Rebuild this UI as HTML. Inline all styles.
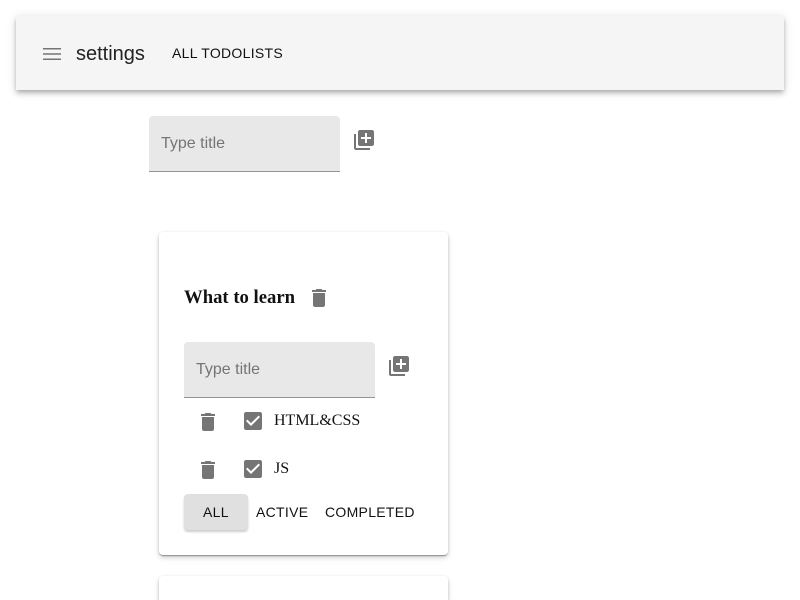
<!DOCTYPE html>
<html style="height:600px;overflow:hidden"><head><style>
body{margin:0;width:800px;height:600px;overflow:hidden;background:#fff;font-family:"Liberation Sans",sans-serif;position:relative}
.a{position:absolute}
.hdr{left:16px;top:16px;width:768px;height:74px;background:#f5f5f5;box-shadow:0 2px 4px -1px rgba(0,0,0,.2),0 4px 5px rgba(0,0,0,.14),0 1px 10px rgba(0,0,0,.12)}
.inp{background:#e8e8e8;border-radius:4px 4px 0 0;border-bottom:1px solid #949494;box-sizing:border-box}
.ph{color:#757575;font-size:16px;position:absolute;left:12px;top:19px}
.card{background:#fff;border-radius:4px;box-shadow:0 2px 1px -1px rgba(0,0,0,.2),0 1px 1px rgba(0,0,0,.14),0 1px 3px rgba(0,0,0,.12),0 3px 6px rgba(0,0,0,.15)}
.btn{font-size:14px;letter-spacing:.3px;color:#111}
</style></head><body>
<div class="a hdr">
<svg class="a" style="left:24px;top:26px" width="24" height="24" viewBox="0 0 24 24"><path fill="#757575" d="M3 18h18v-1.5H3V18zm0-5.25h18v-1.5H3v1.5zM3 6v1.5h18V6H3z"/></svg>
<div class="a" style="left:60px;top:27px;font-size:20px;color:#222">settings</div>
<div class="a btn" style="left:156px;top:29px">ALL TODOLISTS</div>
</div>
<div class="a inp" style="left:149px;top:116px;width:191px;height:56px"><span class="ph">Type title</span></div>
<svg class="a" style="left:352px;top:128px" width="24" height="24" viewBox="0 0 24 24"><path fill="#757575" d="M4 6H2v14c0 1.1.9 2 2 2h14v-2H4V6zm16-4H8c-1.1 0-2 .9-2 2v12c0 1.1.9 2 2 2h12c1.1 0 2-.9 2-2V4c0-1.1-.9-2-2-2zm-1 9h-4v4h-2v-4H9V9h4V5h2v4h4v2z"/></svg>
<div class="a card" style="left:159px;top:232px;width:289px;height:323px">
<div class="a" style="left:25px;top:55px;font-family:'Liberation Serif',serif;font-weight:bold;font-size:18.7px;color:#111">What to learn</div>
<svg class="a" style="left:148px;top:54px" width="24" height="24" viewBox="0 0 24 24"><path fill="#757575" d="M6 19c0 1.1.9 2 2 2h8c1.1 0 2-.9 2-2V7H6v12zM19 4h-3.5l-1-1h-5l-1 1H5v2h14V4z"/></svg>
<div class="a inp" style="left:25px;top:110px;width:191px;height:56px"><span class="ph">Type title</span></div>
<svg class="a" style="left:228px;top:122px" width="24" height="24" viewBox="0 0 24 24"><path fill="#757575" d="M4 6H2v14c0 1.1.9 2 2 2h14v-2H4V6zm16-4H8c-1.1 0-2 .9-2 2v12c0 1.1.9 2 2 2h12c1.1 0 2-.9 2-2V4c0-1.1-.9-2-2-2zm-1 9h-4v4h-2v-4H9V9h4V5h2v4h4v2z"/></svg>
<svg class="a" style="left:37px;top:178px" width="24" height="24" viewBox="0 0 24 24"><path fill="#757575" d="M6 19c0 1.1.9 2 2 2h8c1.1 0 2-.9 2-2V7H6v12zM19 4h-3.5l-1-1h-5l-1 1H5v2h14V4z"/></svg>
<svg class="a" style="left:82px;top:177px" width="24" height="24" viewBox="0 0 24 24"><path fill="#757575" d="M19 3H5c-1.11 0-2 .9-2 2v14c0 1.1.89 2 2 2h14c1.11 0 2-.9 2-2V5c0-1.1-.89-2-2-2zm-9 14l-5-5 1.41-1.41L10 14.17l7.59-7.59L19 8l-9 9z"/></svg>
<div class="a" style="left:115px;top:180px;font-family:'Liberation Serif',serif;font-size:16px;color:#111">HTML&amp;CSS</div>
<svg class="a" style="left:37px;top:226px" width="24" height="24" viewBox="0 0 24 24"><path fill="#757575" d="M6 19c0 1.1.9 2 2 2h8c1.1 0 2-.9 2-2V7H6v12zM19 4h-3.5l-1-1h-5l-1 1H5v2h14V4z"/></svg>
<svg class="a" style="left:82px;top:225px" width="24" height="24" viewBox="0 0 24 24"><path fill="#757575" d="M19 3H5c-1.11 0-2 .9-2 2v14c0 1.1.89 2 2 2h14c1.11 0 2-.9 2-2V5c0-1.1-.89-2-2-2zm-9 14l-5-5 1.41-1.41L10 14.17l7.59-7.59L19 8l-9 9z"/></svg>
<div class="a" style="left:115px;top:228px;font-family:'Liberation Serif',serif;font-size:16px;color:#111">JS</div>
<div class="a" style="left:25px;top:262px;width:64px;height:36px;background:#e0e0e0;border-radius:4px;box-shadow:0 2px 2px rgba(0,0,0,.2)"></div>
<div class="a btn" style="left:44px;top:272px">ALL</div>
<div class="a btn" style="left:97px;top:272px">ACTIVE</div>
<div class="a btn" style="left:166px;top:272px">COMPLETED</div>
</div>
<div class="a card" style="left:159px;top:576px;width:289px;height:24px;border-radius:4px 4px 0 0"></div>
</body></html>
